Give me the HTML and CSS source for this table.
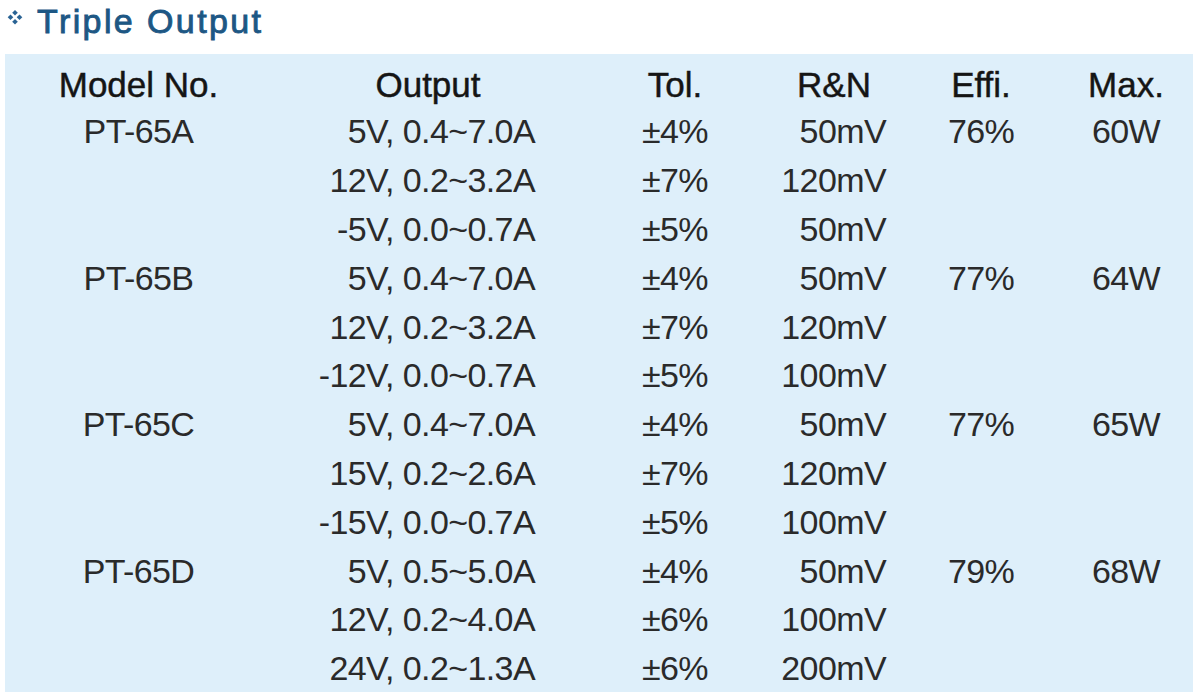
FILE: index.html
```html
<!DOCTYPE html>
<html lang="en">
<head>
<meta charset="utf-8">
<title>Triple Output</title>
<link rel="stylesheet" href="styles.css">
</head>
<body>
<div class="page">
  <h2 class="title">
    <svg class="bullet" viewBox="0 0 16 16" width="16" height="16" aria-hidden="true">
      <path d="M8 0.9 L10.8 3.7 L8 6.5 L5.2 3.7 Z"/>
      <path d="M3.5 5.5 L6.3 8.3 L3.5 11.1 L0.7 8.3 Z"/>
      <path d="M12.5 5.5 L15.3 8.3 L12.5 11.1 L9.7 8.3 Z"/>
      <path d="M8 9.9 L10.8 12.7 L8 15.5 L5.2 12.7 Z"/>
    </svg>
    <span class="title-text">Triple Output</span>
  </h2>
  <div class="panel">
    <div class="grid">
      <div class="h c-model">Model No.</div>
      <div class="h c-out">Output</div>
      <div class="h c-tol">Tol.</div>
      <div class="h c-rn">R&amp;N</div>
      <div class="h c-eff">Effi.</div>
      <div class="h c-max">Max.</div>

      <div class="d c-model">PT-65A</div><div class="d c-out">5V, 0.4~7.0A</div><div class="d c-tol">±4%</div><div class="d c-rn">50mV</div><div class="d c-eff">76%</div><div class="d c-max">60W</div>
      <div class="d c-model"></div><div class="d c-out">12V, 0.2~3.2A</div><div class="d c-tol">±7%</div><div class="d c-rn">120mV</div><div class="d c-eff"></div><div class="d c-max"></div>
      <div class="d c-model"></div><div class="d c-out">-5V, 0.0~0.7A</div><div class="d c-tol">±5%</div><div class="d c-rn">50mV</div><div class="d c-eff"></div><div class="d c-max"></div>

      <div class="d c-model">PT-65B</div><div class="d c-out">5V, 0.4~7.0A</div><div class="d c-tol">±4%</div><div class="d c-rn">50mV</div><div class="d c-eff">77%</div><div class="d c-max">64W</div>
      <div class="d c-model"></div><div class="d c-out">12V, 0.2~3.2A</div><div class="d c-tol">±7%</div><div class="d c-rn">120mV</div><div class="d c-eff"></div><div class="d c-max"></div>
      <div class="d c-model"></div><div class="d c-out">-12V, 0.0~0.7A</div><div class="d c-tol">±5%</div><div class="d c-rn">100mV</div><div class="d c-eff"></div><div class="d c-max"></div>

      <div class="d c-model">PT-65C</div><div class="d c-out">5V, 0.4~7.0A</div><div class="d c-tol">±4%</div><div class="d c-rn">50mV</div><div class="d c-eff">77%</div><div class="d c-max">65W</div>
      <div class="d c-model"></div><div class="d c-out">15V, 0.2~2.6A</div><div class="d c-tol">±7%</div><div class="d c-rn">120mV</div><div class="d c-eff"></div><div class="d c-max"></div>
      <div class="d c-model"></div><div class="d c-out">-15V, 0.0~0.7A</div><div class="d c-tol">±5%</div><div class="d c-rn">100mV</div><div class="d c-eff"></div><div class="d c-max"></div>

      <div class="d c-model">PT-65D</div><div class="d c-out">5V, 0.5~5.0A</div><div class="d c-tol">±4%</div><div class="d c-rn">50mV</div><div class="d c-eff">79%</div><div class="d c-max">68W</div>
      <div class="d c-model"></div><div class="d c-out">12V, 0.2~4.0A</div><div class="d c-tol">±6%</div><div class="d c-rn">100mV</div><div class="d c-eff"></div><div class="d c-max"></div>
      <div class="d c-model"></div><div class="d c-out">24V, 0.2~1.3A</div><div class="d c-tol">±6%</div><div class="d c-rn">200mV</div><div class="d c-eff"></div><div class="d c-max"></div>
    </div>
  </div>
</div>
</body>
</html>
```

FILE: styles.css
```css
html, body {
  margin: 0;
  padding: 0;
  background: #ffffff;
}

.page {
  width: 1200px;
  height: 699px;
  overflow: hidden;
  font-family: "Liberation Sans", Arial, sans-serif;
}

.title {
  display: flex;
  align-items: flex-start;
  gap: 14px;
  margin: 0 0 12px 0;
  padding-left: 7px;
  height: 42px;
  line-height: 42px;
  font-size: 34px;
  font-weight: normal;
  letter-spacing: 2.4px;
  color: #1d5784;
  -webkit-text-stroke: 0.9px #1d5784;
}

.bullet {
  fill: #2a6394;
  flex: none;
  margin-top: 9px;
}

.title-text {
  display: block;
}

.panel {
  margin-left: 5px;
  width: 1188px;
  height: 638px;
  background: #deeffa;
  box-sizing: border-box;
  padding: 9.4px 0 0 15px;
}

.grid {
  display: grid;
  grid-template-columns: 237px 348px 140px 141px 190px 100px;
  grid-auto-rows: 48.8px;
  grid-template-rows: 44px;
  white-space: nowrap;
}

.h {
  font-size: 35px;
  line-height: 44px;
  color: #151515;
  -webkit-text-stroke: 0.45px #151515;
  text-align: center;
}

.d {
  font-size: 34px;
  line-height: 48.8px;
  color: #2a2a2a;
  letter-spacing: -0.6px;
  text-align: center;
}

.h.c-out {
  padding-right: 6px;
}

.d.c-out {
  text-align: right;
  padding-right: 70px;
}

.h.c-rn {
  padding-left: 37px;
}

.d.c-rn {
  text-align: right;
}
```
